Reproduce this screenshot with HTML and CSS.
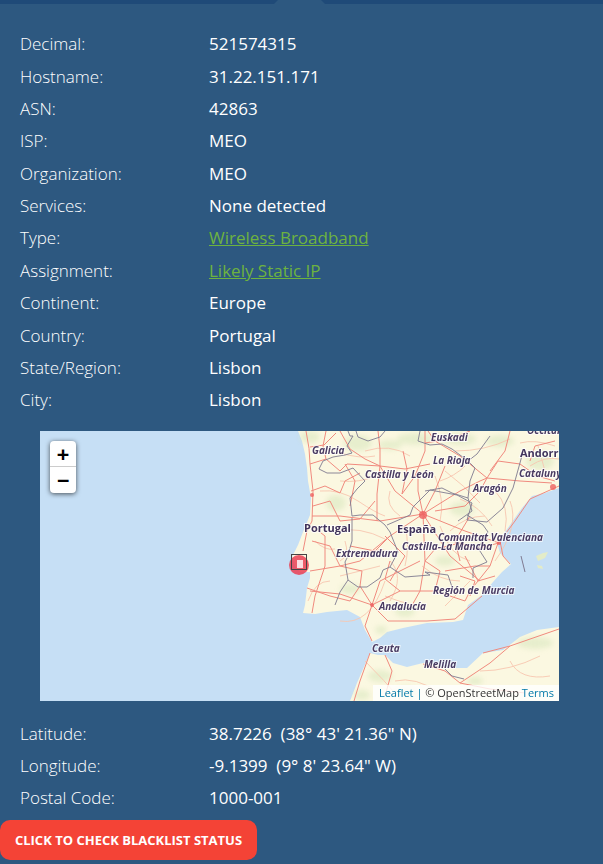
FILE: index.html

```html
<!DOCTYPE HTML>
<html>
<head>
<meta charset="utf-8">
<title>IP details</title>
<link rel="stylesheet" href="styles.css">
</head>

<body>
<div class="topbar"></div>

<dl class="info info-top">
	<dt>Decimal:</dt><dd>521574315</dd>
	<dt>Hostname:</dt><dd>31.22.151.171</dd>
	<dt>ASN:</dt><dd>42863</dd>
	<dt>ISP:</dt><dd>MEO</dd>
	<dt>Organization:</dt><dd>MEO</dd>
	<dt>Services:</dt><dd>None detected</dd>
	<dt>Type:</dt><dd><a href="#">Wireless Broadband</a></dd>
	<dt>Assignment:</dt><dd><a href="#">Likely Static IP</a></dd>
	<dt>Continent:</dt><dd>Europe</dd>
	<dt>Country:</dt><dd>Portugal</dd>
	<dt>State/Region:</dt><dd>Lisbon</dd>
	<dt>City:</dt><dd>Lisbon</dd>
</dl>

<div class="map">
	<svg class="map-svg" viewBox="0 0 519 270" width="519" height="270">
		<!-- land -->
		<path class="land" d="M258 0 L262 10 265 23 267 37 268 50 271 67 270 84 263 101 258 114 252 126 255 135 260 141 270 141 270 147 267 157 265 174 263 182 275 183 287 181 307 179 320 186 325 199 332 211 340 207 347 201 363 197 387 192 413 191 423 189 428 174 442 164 453 151 462 141 471 133 460 122 457 112 465 101 477 84 482 77 492 65 505 62 519 57 519 0 Z"/>
		<path class="land" d="M330 222 L338 224 345 224 353 232 367 236 383 232 395 233 407 237 427 237 443 222 463 219 480 206 497 199 519 196 519 270 310 270 317 252 Z"/>
		<path class="land-green" d="M496 125 L503 122 508 121 505 127 498 130 Z"/>
		<path class="land-green" d="M497 134 L502 135 503 138 498 137 Z"/>

		<!-- green patches -->
		<g class="green">
			<ellipse cx="270" cy="6" rx="10" ry="6"/>
			<ellipse cx="318" cy="12" rx="14" ry="8"/>
			<ellipse cx="350" cy="14" rx="12" ry="5"/>
			<ellipse cx="375" cy="8" rx="18" ry="6"/>
			<ellipse cx="420" cy="8" rx="16" ry="6"/>
			<ellipse cx="460" cy="10" rx="14" ry="6"/>
			<ellipse cx="500" cy="30" rx="14" ry="9"/>
			<ellipse cx="422" cy="78" rx="12" ry="7"/>
			<ellipse cx="296" cy="72" rx="10" ry="8"/>
			<ellipse cx="365" cy="180" rx="10" ry="6"/>
			<ellipse cx="341" cy="199" rx="6" ry="4"/>
			<ellipse cx="310" cy="158" rx="10" ry="5"/>
			<ellipse cx="405" cy="130" rx="10" ry="5"/>
			<ellipse cx="340" cy="245" rx="12" ry="6"/>
			<ellipse cx="366" cy="262" rx="12" ry="6"/>
			<ellipse cx="435" cy="250" rx="8" ry="4"/>
			<ellipse cx="495" cy="212" rx="18" ry="6"/>
			<ellipse cx="322" cy="264" rx="8" ry="5"/>
		</g>

		<!-- small roads -->
		<g class="road-minor">
			<path d="M280 60 Q300 58 318 70 T345 85"/>
			<path d="M295 100 Q320 95 345 108"/>
			<path d="M405 40 Q425 55 440 72"/>
			<path d="M470 70 Q480 95 455 130"/>
			<path d="M400 95 Q410 125 430 130"/>
			<path d="M370 25 Q350 12 325 20"/>
			<path d="M300 190 Q330 195 345 150"/>
			<path d="M455 60 Q470 75 465 100"/>
			<path d="M355 250 Q375 245 400 262"/>
			<path d="M440 240 Q470 240 500 225"/>
			<path d="M290 150 Q275 150 268 170"/>
			<path d="M415 20 Q445 20 470 8"/>
			<path d="M350 130 Q365 145 350 170"/>
			<path d="M382 135 Q400 150 420 150"/>
			<path d="M300 50 Q320 52 335 45"/>
			<path d="M350 60 Q345 75 360 85"/>
			<path d="M400 50 Q415 45 425 35"/>
			<path d="M480 12 Q495 8 515 15"/>
			<path d="M490 35 Q505 25 519 28"/>
			<path d="M305 110 Q310 125 300 130"/>
			<path d="M330 125 Q340 115 345 120"/>
			<path d="M300 145 Q320 140 340 135"/>
			<path d="M410 100 Q425 85 445 85"/>
			<path d="M405 175 Q415 165 430 150"/>
			<path d="M470 230 Q480 250 510 245"/>
			<path d="M325 230 Q345 250 360 268"/>
			<path d="M395 45 Q405 70 400 90"/>
			<path d="M420 68 Q440 75 452 95"/>
			<path d="M365 95 Q370 115 365 135"/>
			<path d="M300 22 Q320 28 335 25"/>
			<path d="M498 15 L505 40"/>
			<path d="M275 110 Q285 120 295 118"/>
			<path d="M345 165 Q370 175 385 175"/>
		</g>

		<!-- main roads -->
		<g class="road">
			<path d="M266 0 Q270 18 270 33 L273 60 272 90 267 100 263 120"/>
			<path d="M270 33 L286 28 L300 40 L307 33 L340 35 L365 38 L390 33"/>
			<path d="M286 0 L283 15 L286 28"/>
			<path d="M270 16 L284 14 L296 2"/>
			<path d="M271 60 L285 55 L300 62 L305 50 L320 42"/>
			<path d="M273 75 L290 70 L300 90 L320 88 L335 70"/>
			<path d="M338 0 L340 18 L340 35 L337 63 L337 90"/>
			<path d="M363 20 L367 38 L362 63 L375 45 L385 20 L385 0"/>
			<path d="M383 83 L355 60 L340 35"/>
			<path d="M383 83 L378 60 L378 45"/>
			<path d="M383 83 L420 60 L440 50 L447 47"/>
			<path d="M383 83 L425 100 L459 112"/>
			<path d="M383 83 L385 130 L380 160 L370 178"/>
			<path d="M383 83 L410 125 L440 150"/>
			<path d="M383 83 L350 105 L320 130 L300 135 L270 140"/>
			<path d="M383 83 L340 90 L300 85 L272 85"/>
			<path d="M447 47 L420 25 L395 10 L388 0"/>
			<path d="M447 47 L458 30 L480 33 L497 45 L515 50"/>
			<path d="M447 47 L480 50 L512 52"/>
			<path d="M447 47 L440 60 L425 75 L395 80"/>
			<path d="M470 0 L465 20 L450 40"/>
			<path d="M385 12 L410 8 L430 0"/>
			<path d="M519 55 L490 68 L475 90 L460 110 L463 125 L470 133"/>
			<path d="M458 112 L450 135 L430 160 L425 170"/>
			<path d="M459 112 L435 118 L420 112 L395 118 L385 130"/>
			<path d="M425 125 L438 150 L455 145"/>
			<path d="M267 157 L290 165 L310 170 L320 155 L332 174"/>
			<path d="M272 95 L285 105 L285 135 L275 165 L272 182"/>
			<path d="M332 174 L300 163 L270 160"/>
			<path d="M332 174 L340 150 L380 130"/>
			<path d="M332 174 L360 160 L395 160 L425 170"/>
			<path d="M332 174 L325 195 L332 210"/>
			<path d="M332 174 L348 190 L387 190 L415 188 L442 165"/>
			<path d="M300 135 L322 140 L320 155"/>
			<path d="M360 160 L345 148 L350 130"/>
			<path d="M395 160 L400 140 L385 130"/>
			<path d="M330 222 L320 250 L314 270"/>
			<path d="M443 222 L470 215 L519 198"/>
			<path d="M383 233 L405 240 L420 252 L450 232 L470 215"/>
			<path d="M345 224 L352 240 L345 265"/>
			<path d="M420 252 L450 258 L485 262"/>
			<path d="M305 33 L315 50 L310 75"/>
			<path d="M300 0 L310 18 L325 28 L340 35"/>
			<path d="M405 35 L395 60 L383 83"/>
			<path d="M490 30 L495 15 L515 10"/>
			<path d="M430 85 L415 110 L420 130"/>
			<path d="M345 105 L365 125 L350 150"/>
			<path d="M310 115 L335 120 L350 105"/>
			<path d="M300 135 L290 115 L272 110"/>
			<path d="M405 140 L435 135 L450 135"/>
			<path d="M430 165 L435 150 L420 145"/>
		</g>

		<!-- city blobs -->
		<g class="city">
			<circle cx="383" cy="84" r="4"/>
			<circle cx="272" cy="64" r="2"/>
			<circle cx="513" cy="56" r="3"/>
			<circle cx="459" cy="112" r="2"/>
			<circle cx="332" cy="174" r="2"/>
		</g>

		<!-- borders -->
		<g class="border">
			<path d="M308 0 L310 5 L313 5 L307 15 L312 22 L305 24 L293 26 L283 30 L279 38 L287 42 L300 42 L313 37 L325 50 L317 58 L310 67 L312 85 L320 84 L333 84 L345 94 L350 101 L358 121 L350 136 L343 139 L340 147 L327 156 L318 156 L308 149 L305 131 L307 127 L312 110 L312 87"/>
			<path d="M308 149 L300 161 L295 174"/>
			<path d="M350 136 L365 146 L390 144 L385 141 L408 144 L412 156"/>
			<path d="M347 94 L370 84 L373 76 L387 62 L390 59 L417 64 L432 72 L427 89 L447 91 L463 77 L473 57 L483 21"/>
			<path d="M385 60 L402 57 L412 62 L428 67 L432 80 L418 90"/>
			<path d="M380 0 L378 10 L390 14 L402 13 L412 18 L428 30 L437 23 L450 5"/>
			<path d="M428 30 L435 37 L430 50 L428 67"/>
			<path d="M427 84 L443 94 L448 101 L438 117 L447 131 L433 137 L433 147"/>
			<path d="M345 0 L340 6 L328 10 L318 6 L316 0"/>
			<path d="M405 238 L412 245 L424 248"/>
		</g>
		<path class="ferry" d="M481 125 L485 141"/>

		<!-- labels -->
		<g class="label">
			<text x="391" y="10">Euskadi</text>
			<text x="272" y="23">Galicia</text>
			<text x="325" y="47">Castilla y León</text>
			<text x="393" y="33">La Rioja</text>
			<text x="479" y="46">Catalunya</text>
			<text x="433" y="61">Aragón</text>
			<text x="398" y="110">Comunitat Valenciana</text>
			<text x="362" y="119">Castilla-La Mancha</text>
			<text x="296" y="126">Extremadura</text>
			<text x="393" y="163">Región de Murcia</text>
			<text x="339" y="179">Andalucía</text>
			<text x="332" y="221">Ceuta</text>
			<text x="384" y="237">Melilla</text>
			<text x="487" y="3">Occitanie</text>
		</g>
		<g class="label-country">
			<text x="264" y="101">Portugal</text>
			<text x="357" y="102">España</text>
			<text x="480" y="26">Andorra</text>
		</g>

		<!-- marker -->
		<circle class="marker-dot" cx="259" cy="134" r="10"/>
		<rect class="marker-fill" x="257" y="129" width="6" height="8"/>
		<rect class="marker-box" x="251.5" y="123.5" width="15" height="15"/>
	</svg>

	<div class="zoom">
		<a href="#">+</a>
		<a href="#">&minus;</a>
	</div>
	<div class="attrib"><a href="#">Leaflet</a> <span class="sep">|</span> © OpenStreetMap <a href="#">Terms</a></div>
</div>

<dl class="info info-bottom">
	<dt>Latitude:</dt><dd>38.7226&nbsp; (38° 43' 21.36" N)</dd>
	<dt>Longitude:</dt><dd>-9.1399&nbsp; (9° 8' 23.64" W)</dd>
	<dt>Postal Code:</dt><dd>1000-001</dd>
</dl>

<a class="btn" href="#">CLICK TO CHECK BLACKLIST STATUS</a>
</body>
</html>
```

FILE: styles.css

```css
* {margin:0; padding:0; box-sizing:border-box;}
html, body {height:100%;}
body {background:#2d5880; font-family:"Open Sans", "Liberation Sans", sans-serif; color:#fff; overflow:hidden;}

.topbar {height:4px; background:#1f4a78; position:relative;}
.topbar::after {content:""; position:absolute; left:274px; top:0; width:51px; height:4px; background:#2d5880; clip-path:polygon(4px 0, 47px 0, 100% 100%, 0 100%);}

.info {display:grid; grid-template-columns:189px 1fr; grid-auto-rows:32.36px; padding-left:20px; font-size:17px; align-items:center;}
.info-top {margin-top:23.6px;}
.info-bottom {margin-top:16px; grid-auto-rows:32px;}
.info dt {font-weight:300;}
.info dd {font-weight:400;}
.info a {color:#6db33f; text-decoration:underline;}

.map {width:519px; height:270px; margin:15.1px 0 0 40px; position:relative; overflow:hidden; background:#c6dff5;}
.map-svg {display:block;}
.land {fill:#fbf8e1;}
.land-green {fill:#e3ecc8;}
.green {filter:blur(2.5px);}
.green ellipse {fill:#dbe7bf; opacity:.6;}
.road-minor path {fill:none; stroke:#f7c6b0; stroke-width:.9;}
.road path {fill:none; stroke:#f08a7e; stroke-width:1; stroke-linejoin:round;}
.city circle {fill:#ee5f5f; opacity:.8;}
.border path {fill:none; stroke:#7f7a90; stroke-width:.9; stroke-linejoin:round;}
.ferry {stroke:#7f7a90; stroke-width:1;}
.label text {font-size:10px; font-weight:700; font-style:italic; fill:#4a3c63; stroke:#fff; stroke-opacity:.7; stroke-width:2px; paint-order:stroke;}
.label-country text {font-size:11px; font-weight:700; fill:#41345c; stroke:#fff; stroke-opacity:.75; stroke-width:2px; paint-order:stroke;}
.marker-dot {fill:#ea4054; opacity:.85;}
.marker-fill {fill:#fff; opacity:.8;}
.marker-box {fill:none; stroke:#444; stroke-width:1;}

.zoom {position:absolute; left:10px; top:10px; width:26px; border-radius:4px; background:#fff; box-shadow:0 1px 5px rgba(0,0,0,.65);}
.zoom a {display:block; height:26px; text-align:center; color:#000; font:700 20px/26px "DejaVu Sans Mono", monospace; text-decoration:none;}
.zoom a:first-child {border-bottom:1px solid #ccc;}

.attrib {position:absolute; right:0; bottom:0; height:16px; line-height:16px; padding:0 5px 0 6px; font-size:11px; color:#333; background:rgba(255,255,255,.8);}
.attrib a {color:#0078a8; text-decoration:none;}
.attrib .sep {color:#0078a8;}

.btn {display:block; width:257px; height:40px; margin-top:7px; line-height:40px; text-align:center; background:#f44336; color:#fff; font-size:13px; font-weight:700; border-radius:10px; text-decoration:none;}
```
